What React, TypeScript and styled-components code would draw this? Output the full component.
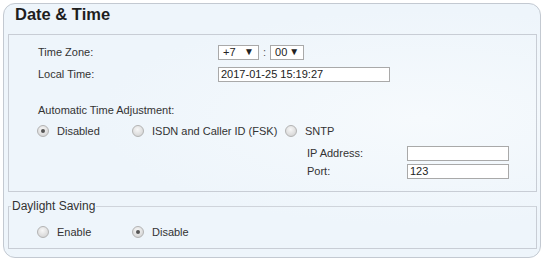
import React from 'react';
import styled, { createGlobalStyle } from 'styled-components';

const GlobalStyle = createGlobalStyle`
  html, body {
    margin: 0;
    padding: 0;
    background: #ffffff;
  }
  body {
    font-family: "Liberation Sans", Arial, sans-serif;
    font-size: 11px;
    color: #333333;
  }
`;

const Panel = styled.div`
  margin: 3px 0 0 3px;
  width: 538px;
  height: 255px;
  box-sizing: border-box;
  border: 1px solid #c3c9d1;
  border-radius: 12px;
  background: #eef5fb;
  background-image: radial-gradient(ellipse at 78% 45%, #f6fafd 0%, #eef5fb 55%);
  overflow: hidden;
`;

const Title = styled.h1`
  margin: 0 0 10px 11px;
  font-size: 16.5px;
  line-height: 20px;
  font-weight: bold;
  color: #1e1e1e;
`;

const Box = styled.div`
  margin-left: 4px;
  width: 529px;
  height: 158px;
  box-sizing: border-box;
  border: 1px solid #c8cdd5;
  padding: 6px 0 0 29px;
`;

const FieldRow = styled.div<{ $h: number; $top?: number }>`
  display: flex;
  align-items: center;
  height: ${p => p.$h}px;
  margin-top: ${p => p.$top ?? 0}px;
`;

const Label = styled.span<{ $w?: number }>`
  display: inline-block;
  width: ${p => (p.$w ? `${p.$w}px` : 'auto')};
  line-height: 13px;
`;

const Select = styled.span<{ $w: number }>`
  display: inline-flex;
  align-items: center;
  justify-content: space-between;
  box-sizing: border-box;
  width: ${p => p.$w}px;
  height: 15px;
  padding: 0 4px 0 4px;
  border: 1px solid #a9a9a9;
  background: #ffffff;
  color: #222;
`;

const Arrow = styled.span`
  font-size: 10px;
  line-height: 10px;
  color: #222;
`;

const Colon = styled.span`
  margin: 0 4px 0 4px;
  color: #555;
`;

const TextInput = styled.span<{ $w: number }>`
  display: inline-flex;
  align-items: center;
  box-sizing: border-box;
  width: ${p => p.$w}px;
  height: 15px;
  padding-left: 2px;
  border: 1px solid #a9a9a9;
  background: #ffffff;
  color: #222;
`;

const RadioGroup = styled.div`
  display: flex;
  align-items: center;
`;

const Option = styled.label<{ $w?: number }>`
  display: flex;
  align-items: center;
  width: ${p => (p.$w ? `${p.$w}px` : 'auto')};
`;

const Circle = styled.span<{ $on?: boolean }>`
  position: relative;
  width: 12px;
  height: 12px;
  margin: 0 8px 0 -1px;
  border-radius: 50%;
  box-sizing: border-box;
  border: 1px solid #b3b3b3;
  background: radial-gradient(circle at 45% 35%, #f7f7f7 0%, #dedede 60%, #cbcbcb 100%);
  &::after {
    content: '';
    display: ${p => (p.$on ? 'block' : 'none')};
    position: absolute;
    left: 3px;
    top: 3px;
    width: 4px;
    height: 4px;
    border-radius: 50%;
    background: #555555;
  }
`;

const Sub = styled.div`
  margin-left: 269px;
`;

const Fieldset = styled.fieldset`
  margin: 7px 0 0 4px;
  width: 529px;
  box-sizing: border-box;
  border: 1px solid #c8cdd5;
  border-top-color: #cfd4db;
  padding: 9px 2px 6px 2px;
`;

const Legend = styled.legend`
  padding: 0 1px;
  font-size: 12px;
  line-height: 14px;
  color: #333;
`;

const Inner = styled.div`
  padding-left: 27px;
`;

type Opt = { label: string; w?: number; on?: boolean };

const Radios: React.FC<{ items: Opt[] }> = ({ items }) => (
  <RadioGroup>
    {items.map(o => (
      <Option key={o.label} $w={o.w}>
        <Circle $on={o.on} />
        <Label>{o.label}</Label>
      </Option>
    ))}
  </RadioGroup>
);

export default function App() {
  return (
    <>
      <GlobalStyle />
      <Panel>
        <Title>Date &amp; Time</Title>
        <Box>
          <FieldRow $h={22}>
            <Label $w={180}>Time Zone:</Label>
            <Select $w={41}>
              <span>+7</span>
              <Arrow>▼</Arrow>
            </Select>
            <Colon>:</Colon>
            <Select $w={34}>
              <span>00</span>
              <Arrow>▼</Arrow>
            </Select>
          </FieldRow>
          <FieldRow $h={22}>
            <Label $w={180}>Local Time:</Label>
            <TextInput $w={172}>2017-01-25 15:19:27</TextInput>
          </FieldRow>
          <FieldRow $h={21} $top={15}>
            <Label>Automatic Time Adjustment:</Label>
          </FieldRow>
          <FieldRow $h={20}>
            <Radios
              items={[
                { label: 'Disabled', w: 95, on: true },
                { label: 'ISDN and Caller ID (FSK)', w: 153 },
                { label: 'SNTP' },
              ]}
            />
          </FieldRow>
          <Sub>
            <FieldRow $h={18} $top={3}>
              <Label $w={100}>IP Address:</Label>
              <TextInput $w={102} />
            </FieldRow>
            <FieldRow $h={18}>
              <Label $w={100}>Port:</Label>
              <TextInput $w={102}>123</TextInput>
            </FieldRow>
          </Sub>
        </Box>
        <Fieldset>
          <Legend>Daylight Saving</Legend>
          <Inner>
            <FieldRow $h={20}>
              <Radios
                items={[
                  { label: 'Enable', w: 95 },
                  { label: 'Disable', on: true },
                ]}
              />
            </FieldRow>
          </Inner>
        </Fieldset>
      </Panel>
    </>
  );
}
